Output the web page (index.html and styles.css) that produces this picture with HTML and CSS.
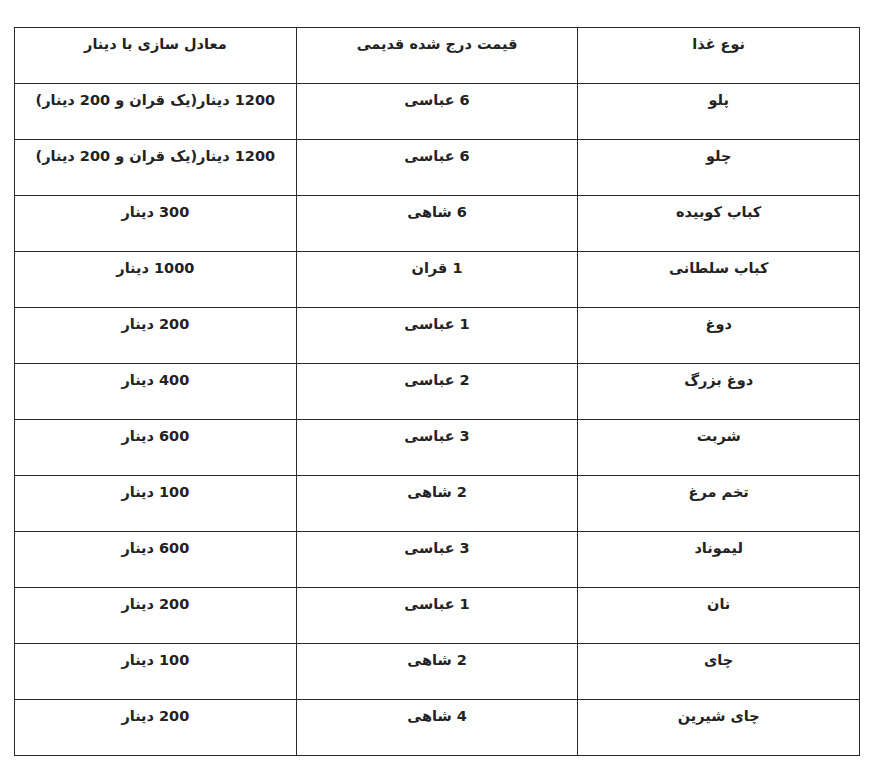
FILE: index.html
```html
<!DOCTYPE html>
<html lang="fa" dir="rtl">
<head>
<meta charset="utf-8">
<link rel="stylesheet" href="styles.css">
</head>
<body>
<table class="prices">
<tbody>
<tr><td>نوع غذا</td><td>قیمت درج شده قدیمی</td><td>معادل سازی با دینار</td></tr>
<tr><td>پلو</td><td>6 عباسی</td><td>1200 دینار(یک قران و 200 دینار)</td></tr>
<tr><td>چلو</td><td>6 عباسی</td><td>1200 دینار(یک قران و 200 دینار)</td></tr>
<tr><td>کباب کوبیده</td><td>6 شاهی</td><td>300 دینار</td></tr>
<tr><td>کباب سلطانی</td><td>1 قران</td><td>1000 دینار</td></tr>
<tr><td>دوغ</td><td>1 عباسی</td><td>200 دینار</td></tr>
<tr><td>دوغ بزرگ</td><td>2 عباسی</td><td>400 دینار</td></tr>
<tr><td>شربت</td><td>3 عباسی</td><td>600 دینار</td></tr>
<tr><td>تخم مرغ</td><td>2 شاهی</td><td>100 دینار</td></tr>
<tr><td>لیموناد</td><td>3 عباسی</td><td>600 دینار</td></tr>
<tr><td>نان</td><td>1 عباسی</td><td>200 دینار</td></tr>
<tr><td>چای</td><td>2 شاهی</td><td>100 دینار</td></tr>
<tr><td>چای شیرین</td><td>4 شاهی</td><td>200 دینار</td></tr>
</tbody>
</table>
</body>
</html>
```
FILE: styles.css
```css
html, body {
  margin: 0;
  padding: 0;
  background: #ffffff;
}
body {
  padding: 27px 19px 0 14px;
  font-family: "DejaVu Sans", sans-serif;
  color: #222222;
}
.prices {
  border-collapse: collapse;
  width: 846px;
  table-layout: fixed;
}
.prices td {
  border: 1px solid #2a2a2a;
  height: 56px;
  box-sizing: border-box;
  padding: 6px 4px 0;
  vertical-align: top;
  text-align: center;
  font-size: 14.5px;
  font-weight: bold;
  line-height: 20px;
  width: 33.33%;
}
```
